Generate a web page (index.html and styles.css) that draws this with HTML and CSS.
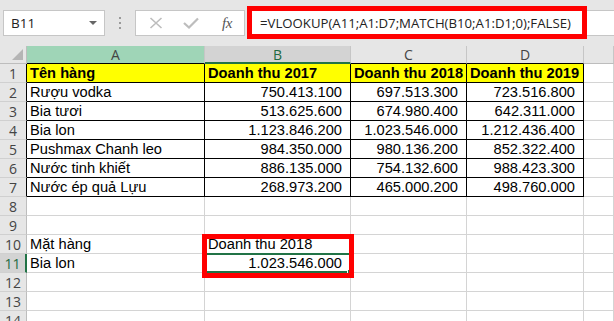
FILE: index.html
```html
<!DOCTYPE html>
<html>
<head>
<meta charset="utf-8">
<link rel="stylesheet" href="styles.css">
</head>
<body>
<div class="bar">
  <div class="namebox"><span class="nb-text">B11</span><span class="nb-caret"></span></div>
  <div class="grip"><i></i><i></i><i></i></div>
  <div class="fxbox">
    <svg class="ic-x" width="14" height="12" viewBox="0 0 14 12"><path d="M1.5 1 L12.5 11 M12.5 1 L1.5 11" stroke="#bdbdbd" stroke-width="1.6" fill="none"/></svg>
    <svg class="ic-ok" width="16" height="12" viewBox="0 0 16 12"><path d="M1 6 L6 10.5 L15 1.5" stroke="#bdbdbd" stroke-width="2.2" fill="none"/></svg>
    <span class="ic-fx">fx</span>
  </div>
  <div class="formula">
    <div class="mark mark-formula">=VLOOKUP(A11;A1:D7;MATCH(B10;A1:D1;0);FALSE)</div>
  </div>
</div>

<div class="sheet">
  <div class="corner"><span class="tri"></span></div>
  <div class="h h-sel-a tb">A</div>
  <div class="h h-sel-b">B</div>
  <div class="h tb">C</div>
  <div class="h tb">D</div>
  <div class="h">&nbsp;</div>

  <div class="rh rt">1</div>
  <div class="c t y">Tên hàng</div>
  <div class="c t y">Doanh thu 2017</div>
  <div class="c t y">Doanh thu 2018</div>
  <div class="c t y">Doanh thu 2019</div>
  <div class="c"></div>

  <div class="rh rt">2</div>
  <div class="c t">Rượu vodka</div>
  <div class="c t n">750.413.100</div>
  <div class="c t n">697.513.300</div>
  <div class="c t n">723.516.800</div>
  <div class="c"></div>

  <div class="rh rt">3</div>
  <div class="c t">Bia tươi</div>
  <div class="c t n">513.625.600</div>
  <div class="c t n">674.980.400</div>
  <div class="c t n">642.311.000</div>
  <div class="c"></div>

  <div class="rh rt">4</div>
  <div class="c t">Bia lon</div>
  <div class="c t n">1.123.846.200</div>
  <div class="c t n">1.023.546.000</div>
  <div class="c t n">1.212.436.400</div>
  <div class="c"></div>

  <div class="rh rt">5</div>
  <div class="c t">Pushmax Chanh leo</div>
  <div class="c t n">984.350.000</div>
  <div class="c t n">980.136.200</div>
  <div class="c t n">852.322.400</div>
  <div class="c"></div>

  <div class="rh rt">6</div>
  <div class="c t">Nước tinh khiết</div>
  <div class="c t n">886.135.000</div>
  <div class="c t n">754.132.600</div>
  <div class="c t n">988.423.300</div>
  <div class="c"></div>

  <div class="rh rt">7</div>
  <div class="c t">Nước ép quả Lựu</div>
  <div class="c t n">268.973.200</div>
  <div class="c t n">465.000.200</div>
  <div class="c t n">498.760.000</div>
  <div class="c"></div>

  <div class="rh">8</div>
  <div class="c"></div><div class="c"></div><div class="c"></div><div class="c"></div><div class="c"></div>

  <div class="rh">9</div>
  <div class="c"></div><div class="c"></div><div class="c"></div><div class="c"></div><div class="c"></div>

  <div class="rh">10</div>
  <div class="c">Mặt hàng</div>
  <div class="c anchor">Doanh thu 2018<span class="mark mark-cells"></span></div>
  <div class="c"></div><div class="c"></div><div class="c"></div>

  <div class="rh rh-sel">11</div>
  <div class="c">Bia lon</div>
  <div class="c n anchor">1.023.546.000<span class="selection"><span class="handle"></span></span></div>
  <div class="c"></div><div class="c"></div><div class="c"></div>

  <div class="rh">12</div>
  <div class="c"></div><div class="c"></div><div class="c"></div><div class="c"></div><div class="c"></div>

  <div class="rh">13</div>
  <div class="c"></div><div class="c"></div><div class="c"></div><div class="c"></div><div class="c"></div>

  <div class="rh">14</div>
  <div class="c"></div><div class="c"></div><div class="c"></div><div class="c"></div><div class="c"></div>
</div>
</body>
</html>
```

FILE: styles.css
```css
* { box-sizing: border-box; }
html, body { margin: 0; padding: 0; }
body {
  width: 614px;
  height: 321px;
  overflow: hidden;
  background: #ffffff;
  font-family: "Liberation Sans", Arial, sans-serif;
}

/* ---------- formula bar ---------- */
.bar {
  height: 46px;
  background: #e6e6e6;
  display: flex;
  align-items: flex-start;
  padding: 10px 0 0 3px;
}
.namebox {
  width: 102px;
  height: 26px;
  background: #fff;
  border: 1px solid #c6c6c6;
  display: flex;
  align-items: center;
  justify-content: space-between;
  padding: 0 7px 0 7px;
  font-family: "Open Sans", "Noto Sans", sans-serif;
  font-size: 13.5px;
  color: #222;
}
.nb-caret {
  width: 0; height: 0;
  border-left: 4px solid transparent;
  border-right: 4px solid transparent;
  border-top: 4px solid #666;
}
.grip {
  width: 30px;
  height: 26px;
  display: flex;
  flex-direction: column;
  align-items: center;
  justify-content: center;
  gap: 3px;
}
.grip i {
  display: block;
  width: 2px; height: 2px;
  background: #9a9a9a;
}
.fxbox {
  width: 110px;
  height: 26px;
  background: #fff;
  border: 1px solid #c6c6c6;
  display: flex;
  align-items: center;
  padding-left: 13px;
}
.ic-x { margin-right: 20px; }
.ic-ok { margin-right: 23px; }
.ic-fx {
  font-family: "Liberation Serif", "Times New Roman", serif;
  font-style: italic;
  font-size: 15px;
  color: #555;
  letter-spacing: -0.5px;
}
.formula {
  flex: 1;
  height: 26px;
  margin-left: 3px;
  background: #fff;
  border: 1px solid #c6c6c6;
  border-right: none;
}
.mark { border: 5px solid #ff0000; }
.mark-formula {
  width: 340px;
  height: 33px;
  margin: -5px 0 0 -2px;
  padding-left: 8px;
  display: flex;
  align-items: center;
  font-family: "Open Sans", "Noto Sans", sans-serif;
  font-size: 13.2px;
  color: #222;
  white-space: nowrap;
}

/* ---------- sheet ---------- */
.sheet {
  display: grid;
  grid-template-columns: 27px 178px 146px 116px 117px 30px;
  grid-template-rows: 18px repeat(14, 19px);
}
.corner {
  background: #e6e6e6;
  border-right: 1px solid #bdbdbd;
  border-bottom: 1px solid #bdbdbd;
  position: relative;
}
.tri {
  position: absolute;
  right: 3px; bottom: 3px;
  width: 0; height: 0;
  border-left: 11px solid transparent;
  border-bottom: 11px solid #b5b5b5;
}
.h {
  background: #e6e6e6;
  border-right: 1px solid #c6c6c6;
  border-bottom: 1px solid #bdbdbd;
  text-align: center;
  font-family: "Open Sans", "Noto Sans", sans-serif;
  font-size: 14px;
  line-height: 17px;
  color: #444;
}
.h.tb { border-bottom-color: #000; }
.h-sel-a { background: #9fd5b7; border-right-color: #c6c6c6; }
.h-sel-b {
  background: #d3d3d3;
  border-bottom: 2px solid #217346;
  color: #1f6b42;
}
.rh {
  background: #e6e6e6;
  border-right: 1px solid #bdbdbd;
  border-bottom: 1px solid #d0d0d0;
  text-align: center;
  font-family: "Open Sans", "Noto Sans", sans-serif;
  font-size: 14px;
  line-height: 19px;
  color: #444;
}
.rh.rt { border-right-color: #000; }
.rh-sel {
  background: #d3d3d3;
  border-right: 2px solid #217346;
  color: #1f6b42;
}
.c {
  border-right: 1px solid #d4d4d4;
  border-bottom: 1px solid #d4d4d4;
  padding: 1px 3px 0 3px;
  font-size: 14.67px;
  line-height: 17px;
  color: #000;
  white-space: nowrap;
  overflow: hidden;
}
.c.t { border-right-color: #000; border-bottom-color: #000; }
.c.y { background: #ffff00; font-weight: bold; }
.c.n { text-align: right; padding-right: 8px; }
.c.anchor { position: relative; overflow: visible; }

.selection {
  position: absolute;
  left: -1px; top: -1px;
  width: 147px; height: 20px;
  border: 2px solid #217346;
  z-index: 1;
}
.handle {
  position: absolute;
  right: -4px; bottom: -4px;
  width: 6px; height: 6px;
  background: #217346;
  border: 1px solid #fff;
}
.mark-cells {
  position: absolute;
  left: -3px; top: -1px;
  width: 152px; height: 44px;
  z-index: 2;
}
```
